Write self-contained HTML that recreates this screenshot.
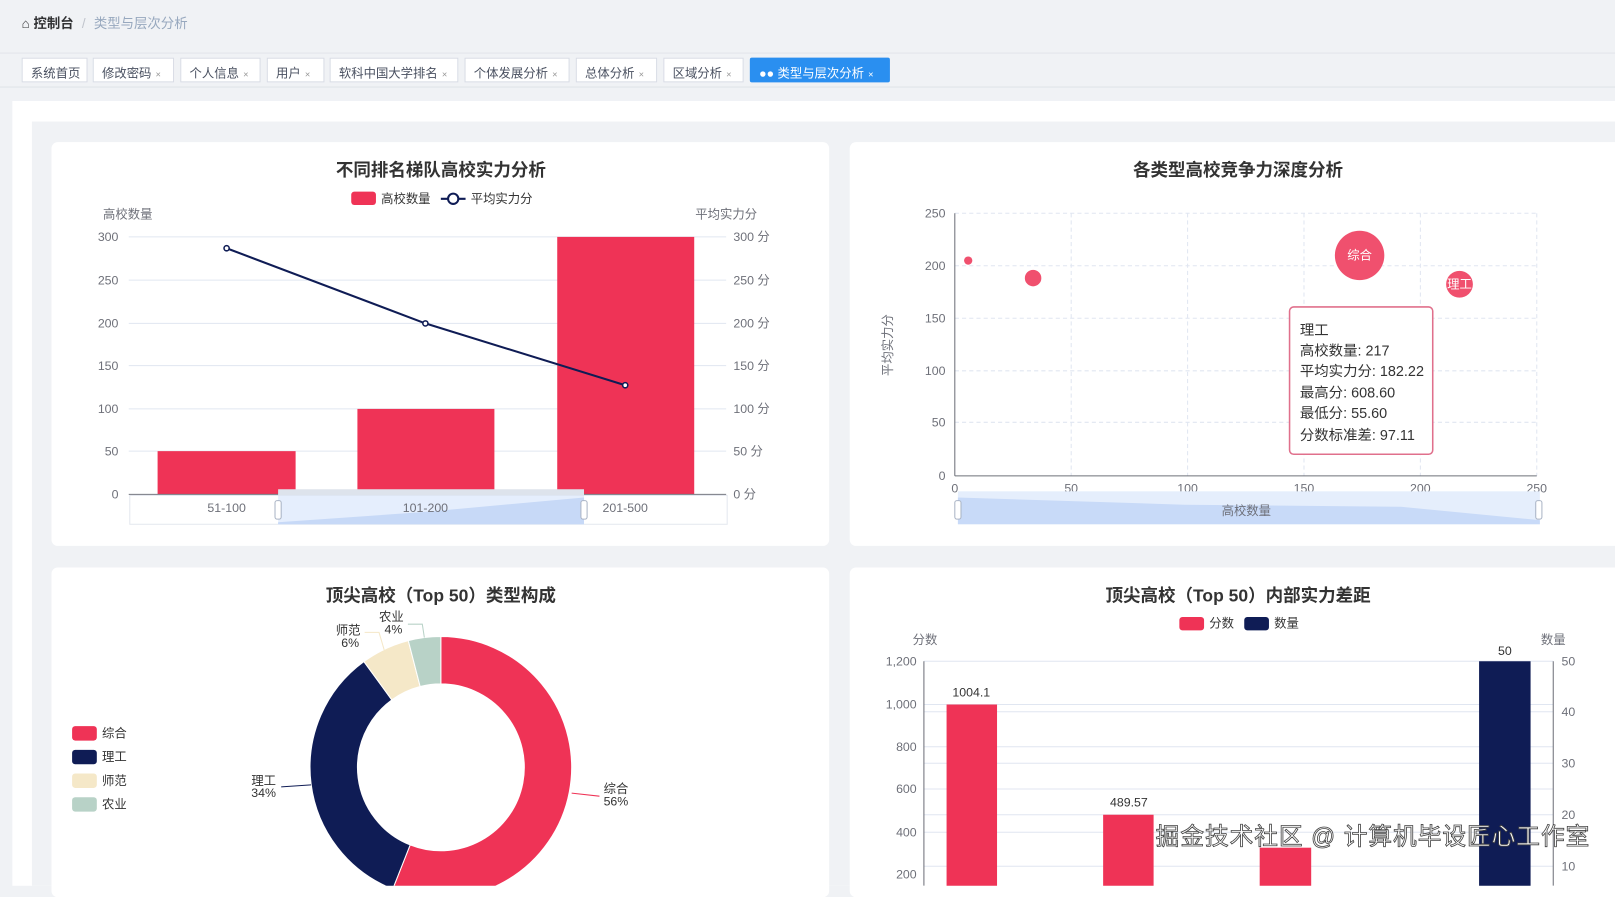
<!DOCTYPE html>
<html><head><meta charset="utf-8">
<style>
html,body{margin:0;padding:0;width:1615px;height:875px;overflow:hidden;background:#f0f2f5;font-family:"Liberation Sans","Noto Sans CJK SC",sans-serif;}
#wrap{position:absolute;left:0;top:0;width:1568px;height:860px;transform:scale(1.03);transform-origin:0 0;}
.abs{position:absolute;}
.tab{position:absolute;top:56px;height:24px;border:1px solid #d8dce5;background:#fff;font-size:12px;color:#495060;box-sizing:border-box;line-height:29px;padding-left:8px;}
.tab span{color:#999;font-size:9px;margin-left:4px;}
.card{position:absolute;background:#fff;border-radius:6px;}
svg text{font-family:"Liberation Sans","Noto Sans CJK SC",sans-serif;}
</style></head><body>
<div id="wrap">
<div class="abs" style="left:21px;top:12px;font-size:13px;color:#303133;">
<span style="font-size:13px">&#8962;</span> <b>控制台</b><span style="color:#c0c4cc;margin:0 8px">/</span><span style="color:#97a8be">类型与层次分析</span></div>
<div class="abs" style="left:0;top:51px;width:1568px;height:1px;background:#e2e5ea"></div>
<div class="abs" style="left:0;top:84px;width:1568px;height:1px;background:#dfe3e8"></div>
<div class="tab" style="left:21px;width:64px">系统首页</div>
<div class="tab" style="left:90px;width:79px">修改密码<span>×</span></div>
<div class="tab" style="left:175px;width:78px">个人信息<span>×</span></div>
<div class="tab" style="left:259px;width:56px">用户<span>×</span></div>
<div class="tab" style="left:320px;width:125px">软科中国大学排名<span>×</span></div>
<div class="tab" style="left:451px;width:102px">个体发展分析<span>×</span></div>
<div class="tab" style="left:559px;width:79px">总体分析<span>×</span></div>
<div class="tab" style="left:644px;width:78px">区域分析<span>×</span></div>
<div class="tab" style="left:728px;width:136px;background:#2a8ff0;border-color:#2a8ff0;color:#fff;border-radius:2px">●● 类型与层次分析<span style="color:#fff">×</span></div>
<div class="abs" style="left:12px;top:98px;width:1556px;height:762px;background:#fff"></div>
<div class="abs" style="left:31px;top:118px;width:1537px;height:742px;background:#f0f2f5"></div>
<div class="card" style="left:50px;top:138px;width:755px;height:392px"></div>
<div class="card" style="left:825px;top:138px;width:760px;height:392px"></div>
<div class="card" style="left:50px;top:551px;width:755px;height:320px"></div>
<div class="card" style="left:825px;top:551px;width:760px;height:320px"></div>

<svg class="abs" style="left:0;top:0" width="1568" height="860" viewBox="0 0 1568 860">
<g font-size="12" fill="#6e7079">
<text x="428" y="171" text-anchor="middle" font-size="17" font-weight="bold" fill="#333">不同排名梯队高校实力分析</text>
<rect x="341" y="186" width="24" height="13" rx="3" fill="#ef3356"/><text x="370" y="197" fill="#333">高校数量</text>
<line x1="428" y1="193" x2="452" y2="193" stroke="#0f1c55" stroke-width="2"/><circle cx="440" cy="193" r="5" fill="#fff" stroke="#0f1c55" stroke-width="2"/><text x="457" y="197" fill="#333">平均实力分</text>
<text x="100" y="212">高校数量</text><text x="675" y="212">平均实力分</text>
<g stroke="#e0e6f1"><line x1="125" y1="230" x2="705" y2="230"/><line x1="125" y1="272" x2="705" y2="272"/><line x1="125" y1="314" x2="705" y2="314"/><line x1="125" y1="355" x2="705" y2="355"/><line x1="125" y1="397" x2="705" y2="397"/><line x1="125" y1="438" x2="705" y2="438"/></g>
<g text-anchor="end"><text x="115" y="234">300</text><text x="115" y="276">250</text><text x="115" y="318">200</text><text x="115" y="359">150</text><text x="115" y="401">100</text><text x="115" y="442">50</text><text x="115" y="484">0</text></g>
<text x="712" y="234">300 分</text><text x="712" y="276">250 分</text><text x="712" y="318">200 分</text><text x="712" y="359">150 分</text><text x="712" y="401">100 分</text><text x="712" y="442">50 分</text><text x="712" y="484">0 分</text>
<rect x="153" y="438" width="134" height="42" fill="#ef3356"/><rect x="347" y="397" width="133" height="83" fill="#ef3356"/><rect x="541" y="230" width="133" height="250" fill="#ef3356"/>
<line x1="125" y1="480" x2="705" y2="480" stroke="#6e7079"/>
<polyline points="220,241 413,314 607,374" fill="none" stroke="#0f1c55" stroke-width="2"/>
<g fill="#fff" stroke="#0f1c55" stroke-width="1.5"><circle cx="220" cy="241" r="2.5"/><circle cx="413" cy="314" r="2.5"/><circle cx="607" cy="374" r="2.5"/></g>
<rect x="126" y="481" width="580" height="28" fill="none" stroke="#e4e8ef"/>
<rect x="270" y="481" width="297" height="28" fill="#dfeafc" opacity="0.8"/>
<path d="M270 507 L413 497 L567 483 L567 509 L270 509Z" fill="#c7d9f7"/>
<rect x="270" y="475" width="297" height="6" fill="#dde3ec"/>
<rect x="267" y="486" width="6" height="18" rx="2" fill="#fff" stroke="#aab4c5"/><rect x="564" y="486" width="6" height="18" rx="2" fill="#fff" stroke="#aab4c5"/>
<text x="220" y="497" text-anchor="middle">51-100</text><text x="413" y="497" text-anchor="middle">101-200</text><text x="607" y="497" text-anchor="middle">201-500</text>

<text x="1202" y="171" text-anchor="middle" font-size="17" font-weight="bold" fill="#333">各类型高校竞争力深度分析</text>
<g stroke="#e0e6f1" stroke-dasharray="4 3"><line x1="927" y1="207" x2="1492" y2="207"/><line x1="927" y1="258" x2="1492" y2="258"/><line x1="927" y1="309" x2="1492" y2="309"/><line x1="927" y1="360" x2="1492" y2="360"/><line x1="927" y1="410" x2="1492" y2="410"/>
<line x1="1040" y1="207" x2="1040" y2="462"/><line x1="1153" y1="207" x2="1153" y2="462"/><line x1="1266" y1="207" x2="1266" y2="462"/><line x1="1379" y1="207" x2="1379" y2="462"/><line x1="1492" y1="207" x2="1492" y2="462"/></g>
<line x1="927" y1="207" x2="927" y2="462" stroke="#6e7079"/><line x1="927" y1="462" x2="1492" y2="462" stroke="#6e7079"/>
<g text-anchor="end"><text x="918" y="211">250</text><text x="918" y="262">200</text><text x="918" y="313">150</text><text x="918" y="364">100</text><text x="918" y="414">50</text><text x="918" y="466">0</text></g>
<g text-anchor="middle"><text x="927" y="478">0</text><text x="1040" y="478">50</text><text x="1153" y="478">100</text><text x="1266" y="478">150</text><text x="1379" y="478">200</text><text x="1492" y="478">250</text></g>
<text transform="translate(866,335) rotate(-90)" text-anchor="middle">平均实力分</text>
<g fill="#f0506e"><circle cx="940" cy="253" r="4"/><circle cx="1003" cy="270" r="8"/><circle cx="1320" cy="248" r="24"/><circle cx="1417" cy="276" r="13"/></g>
<text x="1320" y="252" text-anchor="middle" fill="#fff">综合</text><text x="1417" y="280" text-anchor="middle" fill="#fff">理工</text>
<rect x="930" y="477" width="565" height="32" fill="#e5eefc"/>
<path d="M930 483 L1150 490 L1360 492 L1495 505 L1495 509 L930 509Z" fill="#c8daf8"/>
<rect x="927" y="486" width="6" height="18" rx="2" fill="#fff" stroke="#aab4c5"/><rect x="1491" y="486" width="6" height="18" rx="2" fill="#fff" stroke="#aab4c5"/>
<text x="1210" y="500" text-anchor="middle">高校数量</text>
<rect x="1252" y="298" width="139" height="143" rx="4" fill="#fff" stroke="#e0708c" stroke-width="1.5"/>
<g font-size="14" fill="#333"><text x="1262" y="325">理工</text><text x="1262" y="345">高校数量: 217</text><text x="1262" y="365">平均实力分: 182.22</text><text x="1262" y="386">最高分: 608.60</text><text x="1262" y="406">最低分: 55.60</text><text x="1262" y="427">分数标准差: 97.11</text></g>

<text x="428" y="584" text-anchor="middle" font-size="17" font-weight="bold" fill="#333">顶尖高校（Top 50）类型构成</text>
<g stroke="#fff" stroke-width="1">
<path d="M428 618 A127 127 0 1 1 381.3 863.1 L398.2 820.3 A81 81 0 1 0 428 664 Z" fill="#ef3356"/>
<path d="M381.3 863.1 A127 127 0 0 1 353.3 642.3 L380.4 679.5 A81 81 0 0 0 398.2 820.3 Z" fill="#0f1c55"/>
<path d="M353.3 642.3 A127 127 0 0 1 396.4 622 L407.9 666.5 A81 81 0 0 0 380.4 679.5 Z" fill="#f5e8c8"/>
<path d="M396.4 622 A127 127 0 0 1 428 618 L428 664 A81 81 0 0 0 407.9 666.5 Z" fill="#b8d2c7"/></g>
<g fill="none" stroke-width="1"><path d="M555 770 L582 773" stroke="#ef3356"/><path d="M302 762 L273 764" stroke="#0f1c55"/><path d="M373 631 L368 614 L354 614" stroke="#f5e8c8"/><path d="M412 619 L410 606 L396 606" stroke="#b8d2c7"/></g>
<g fill="#333" text-anchor="middle"><text x="380" y="603">农业</text><text x="382" y="615">4%</text><text x="338" y="616">师范</text><text x="340" y="628">6%</text><text x="256" y="762">理工</text><text x="256" y="774">34%</text><text x="598" y="770">综合</text><text x="598" y="782">56%</text></g>
<rect x="70" y="705" width="24" height="14" rx="3" fill="#ef3356"/><text x="99" y="716" fill="#333">综合</text>
<rect x="70" y="728" width="24" height="14" rx="3" fill="#0f1c55"/><text x="99" y="739" fill="#333">理工</text>
<rect x="70" y="751" width="24" height="14" rx="3" fill="#f5e8c8"/><text x="99" y="762" fill="#333">师范</text>
<rect x="70" y="774" width="24" height="14" rx="3" fill="#b8d2c7"/><text x="99" y="785" fill="#333">农业</text>

<text x="1202" y="584" text-anchor="middle" font-size="17" font-weight="bold" fill="#333">顶尖高校（Top 50）内部实力差距</text>
<rect x="1145" y="599" width="24" height="13" rx="3" fill="#ef3356"/><text x="1174" y="609" fill="#333">分数</text>
<rect x="1208" y="599" width="24" height="13" rx="3" fill="#0f1c55"/><text x="1237" y="609" fill="#333">数量</text>
<text x="886" y="625">分数</text><text x="1496" y="625">数量</text>
<g stroke="#e0e6f1"><line x1="897" y1="642" x2="1508" y2="642"/><line x1="897" y1="684" x2="1508" y2="684"/><line x1="897" y1="691" x2="1508" y2="691"/><line x1="897" y1="725" x2="1508" y2="725"/><line x1="897" y1="741" x2="1508" y2="741"/><line x1="897" y1="766" x2="1508" y2="766"/><line x1="897" y1="791" x2="1508" y2="791"/><line x1="897" y1="808" x2="1508" y2="808"/><line x1="897" y1="841" x2="1508" y2="841"/></g>
<line x1="897" y1="642" x2="897" y2="860" stroke="#6e7079"/><line x1="1508" y1="642" x2="1508" y2="860" stroke="#6e7079"/>
<g text-anchor="end"><text x="890" y="646">1,200</text><text x="890" y="688">1,000</text><text x="890" y="729">800</text><text x="890" y="770">600</text><text x="890" y="812">400</text><text x="890" y="853">200</text></g>
<text x="1516" y="646">50</text><text x="1516" y="695">40</text><text x="1516" y="745">30</text><text x="1516" y="795">20</text><text x="1516" y="845">10</text>
<rect x="919" y="684" width="49" height="180" fill="#ef3356"/><rect x="1071" y="791" width="49" height="70" fill="#ef3356"/><rect x="1223" y="823" width="50" height="40" fill="#ef3356"/><rect x="1436" y="642" width="50" height="220" fill="#0f1c55"/>
<g fill="#333" text-anchor="middle"><text x="943" y="676">1004.1</text><text x="1096" y="783">489.57</text><text x="1461" y="636">50</text></g>
<text x="1122" y="820" font-size="23" fill="#fff" stroke="#444" stroke-width="0.8" textLength="421">掘金技术社区 @ 计算机毕设匠心工作室</text>
</g>
</svg>
</div>
</body></html>
